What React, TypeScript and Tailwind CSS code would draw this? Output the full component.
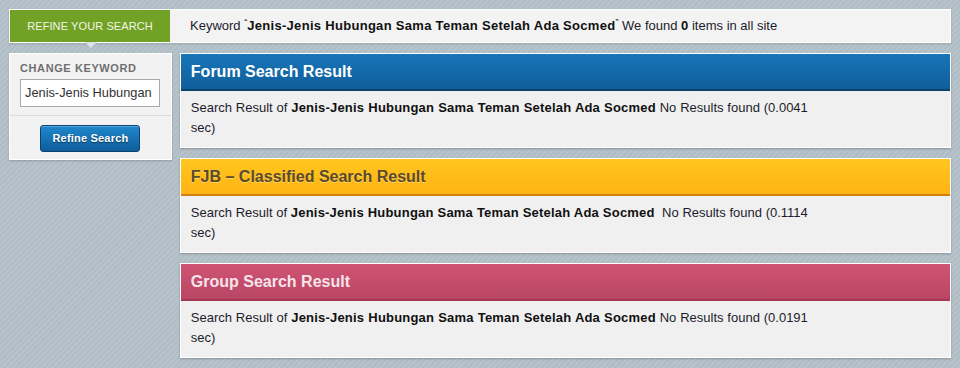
import React from "react";

const kw = "Jenis-Jenis Hubungan Sama Teman Setelah Ada Socmed";

function Card({
  title,
  headerCls,
  lineCls,
  titleCls,
  tail,
}: {
  title: string;
  headerCls: string;
  lineCls: string;
  titleCls: string;
  tail: string;
}) {
  return (
    <div className="border border-white bg-[#f0f0f0] shadow-[0_1px_2px_rgba(0,0,0,0.25)]">
      <div className={`h-[35px] flex items-center px-[10px] ${headerCls}`}>
        <span className={`text-[16px] leading-[20px] font-bold ${titleCls}`}>{title}</span>
      </div>
      <div className={`h-[2px] ${lineCls}`} />
      <div className="pt-[7px] pb-[9px] px-[10px]">
        <p className="w-[617px] text-justify text-[13px] leading-[20px] text-[#1c1c2c]">
          Search Result of <b className="text-[#111] tracking-[0.2px]">{kw}</b>
          {tail}
        </p>
      </div>
    </div>
  );
}

export default function App() {
  return (
    <div
      className="w-[960px] h-[368px] overflow-hidden p-[9px] bg-[#b5c1c9] bg-[repeating-linear-gradient(135deg,#b7c3cb_0px,#b7c3cb_2px,#b1bdc5_2px,#b1bdc5_4px)]"
      style={{ fontFamily: '"Liberation Sans", Arial, sans-serif' }}
    >
      {/* top bar */}
      <div className="relative w-[942px] h-[34px] border border-white bg-[#f3f3f3] flex items-center shadow-[0_1px_2px_rgba(0,0,0,0.15)]">
        <div className="relative w-[160px] h-full bg-[#71a226] flex items-center justify-center">
          <span className="text-[11px] text-[#f2f5e6] tracking-[0.1px] uppercase">Refine your search</span>
          <div className="absolute left-[75px] top-full w-0 h-0 border-l-[6px] border-r-[6px] border-t-[6px] border-l-transparent border-r-transparent border-t-[#dde2e6]" />
        </div>
        <div className="pl-[20px] text-[13px] text-[#1c1c2c]">
          Keyword <span className="text-[9px] align-top">“</span>
          <b className="text-[#111] tracking-[0.3px]">{kw}</b>
          <span className="text-[9px] align-top">”</span> We found <b className="text-[#111]">0</b> items in all site
        </div>
      </div>

      <div className="flex gap-[8px] mt-[10px]">
        {/* left panel */}
        <div className="w-[163px] h-[107px] self-start border border-white bg-[#f2f2f2] shadow-[0_1px_2px_rgba(0,0,0,0.2)]">
          <div className="px-[10px] pt-[7px]">
            <div className="text-[11px] font-bold tracking-[0.6px] text-[#6f6f6f] leading-[14px]">CHANGE KEYWORD</div>
            <div className="mt-[4px] w-[140px] h-[28px] border border-[#a9a9a9] bg-white flex items-center px-[4px] overflow-hidden">
              <span className="text-[12.8px] text-[#333] whitespace-nowrap">Jenis-Jenis Hubungan</span>
            </div>
          </div>
          <div className="mt-[8px] h-px bg-[#dcdcdc]" />
          <div className="flex justify-center pt-[9px]">
            <button className="w-[100px] h-[27px] rounded-[3px] border border-[#0b4474] bg-[linear-gradient(#1e88cc,#0e5d9a)] text-white text-[11px] font-bold tracking-[0.2px] [text-shadow:0_1px_1px_rgba(0,0,0,0.5)] shadow-[inset_0_1px_0_rgba(255,255,255,0.25)]">
              Refine Search
            </button>
          </div>
        </div>

        {/* results */}
        <div className="w-[772px] flex flex-col gap-[10px]">
          <Card
            title="Forum Search Result"
            headerCls="bg-[linear-gradient(#1775b8,#0f5f9b)]"
            lineCls="bg-[#0b426c]"
            titleCls="text-white"
            tail=" No Results found (0.0041 sec)"
          />
          <Card
            title="FJB – Classified Search Result"
            headerCls="bg-[linear-gradient(#ffc61f,#ffb414)]"
            lineCls="bg-[#d0800e]"
            titleCls="text-[#5b4a2c] [text-shadow:0_1px_0_rgba(255,230,150,0.6)]"
            tail={"\u00a0 No Results found (0.1114 sec)"}
          />
          <Card
            title="Group Search Result"
            headerCls="bg-[linear-gradient(#d05475,#b94563)]"
            lineCls="bg-[#a53656]"
            titleCls="text-[#f6e4ea]"
            tail=" No Results found (0.0191 sec)"
          />
        </div>
      </div>
    </div>
  );
}
